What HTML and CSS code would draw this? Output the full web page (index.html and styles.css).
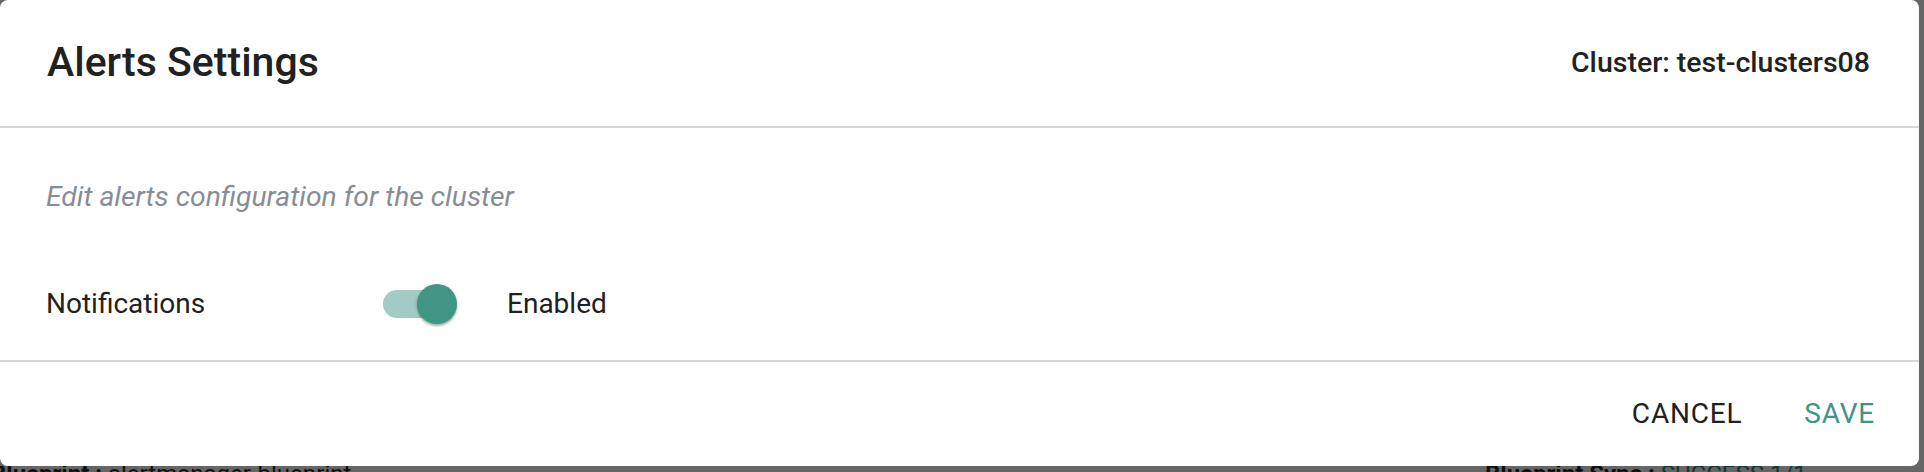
FILE: index.html
```html
<html>

<head>
    <meta charset="utf-8">
    <title>Alerts Settings</title>
    <link rel="stylesheet" href="styles.css">
</head>

<body>
    <div class="dialog">
        <div class="dialog-header">
            <h2 class="title">Alerts Settings</h2>
            <div class="cluster">Cluster: test-clusters08</div>
        </div>
        <div class="dialog-body">
            <p class="hint">Edit alerts configuration for the cluster</p>
            <div class="row">
                <div class="label">Notifications</div>
                <div class="switch">
                    <span class="track"></span>
                    <span class="thumb"></span>
                </div>
                <div class="state">Enabled</div>
            </div>
        </div>
        <div class="dialog-footer">
            <button class="btn">Cancel</button>
            <button class="btn primary">Save</button>
        </div>
    </div>
    <!-- page behind the overlay, only its top edge shows -->
    <div class="peek">
        <div class="peek-line">
            <span class="peek-left"><b>Blueprint :</b> alertmanager-blueprint</span>
            <span class="peek-right"><b>Blueprint Sync :</b> <span class="ok">SUCCESS 1/1</span></span>
        </div>
    </div>
</body>

</html>
```

FILE: styles.css
```css
html,
body {
    margin: 0;
    height: 100%;
    overflow: hidden;
}

body {
    background-color: #666;
    font: 400 28px/1.2 Roboto, sans-serif;
    color: #212121;
}

.dialog {
    width: calc(100% - 5px);
    height: 466px;
    box-sizing: border-box;
    background-color: #fff;
    border-radius: 8px;
    display: flex;
    flex-direction: column;
}

.dialog-header {
    height: 128px;
    box-sizing: border-box;
    padding: 0 49px 0 47px;
    display: flex;
    align-items: center;
    justify-content: space-between;
    border-bottom: 2px solid #d6d6d6;
}

.title {
    margin: 0;
    font-size: 41px;
    font-weight: 500;
    color: #212121;
}

.cluster {
    font-size: 28.5px;
    font-weight: 500;
    color: #212121;
}

.dialog-body {
    flex: 1;
    padding: 49px 47px 0 46px;
    border-bottom: 2px solid #d6d6d6;
}

.hint {
    margin: 0;
    line-height: 40px;
    font-size: 28.3px;
    font-style: italic;
    color: #878d96;
}

.row {
    margin-top: 59px;
    height: 56px;
    display: flex;
    align-items: center;
}

.label {
    width: 337px;
}

.switch {
    position: relative;
    width: 74px;
    height: 40px;
    display: flex;
    align-items: center;
}

.track {
    width: 68px;
    height: 28px;
    border-radius: 14px;
    background-color: #a1cbc4;
}

.thumb {
    position: absolute;
    left: 34px;
    top: 0;
    width: 40px;
    height: 40px;
    border-radius: 50%;
    background-color: #409584;
    box-shadow: 0 2px 2px rgba(0, 0, 0, 0.24), 0 1px 4px rgba(0, 0, 0, 0.14);
}

.state {
    margin-left: 50px;
}

.dialog-footer {
    height: 104px;
    padding-right: 44px;
    display: flex;
    align-items: center;
    justify-content: flex-end;
    gap: 62px;
}

.btn {
    padding: 0;
    border: 0;
    background: none;
    font: 400 28px/1.2 Roboto, sans-serif;
    letter-spacing: 0.8px;
    text-transform: uppercase;
    color: #212121;
    cursor: pointer;
}

.btn.primary {
    color: #3e9585;
}

.peek {
    height: 6px;
    overflow: hidden;
}

.peek-line {
    margin-top: -6px;
    font-size: 24px;
    line-height: 28px;
    display: flex;
    color: #111;
}

.peek-left {
    margin-left: -9px;
    width: 1494px;
}

.ok {
    color: #0d3b31;
}
```
